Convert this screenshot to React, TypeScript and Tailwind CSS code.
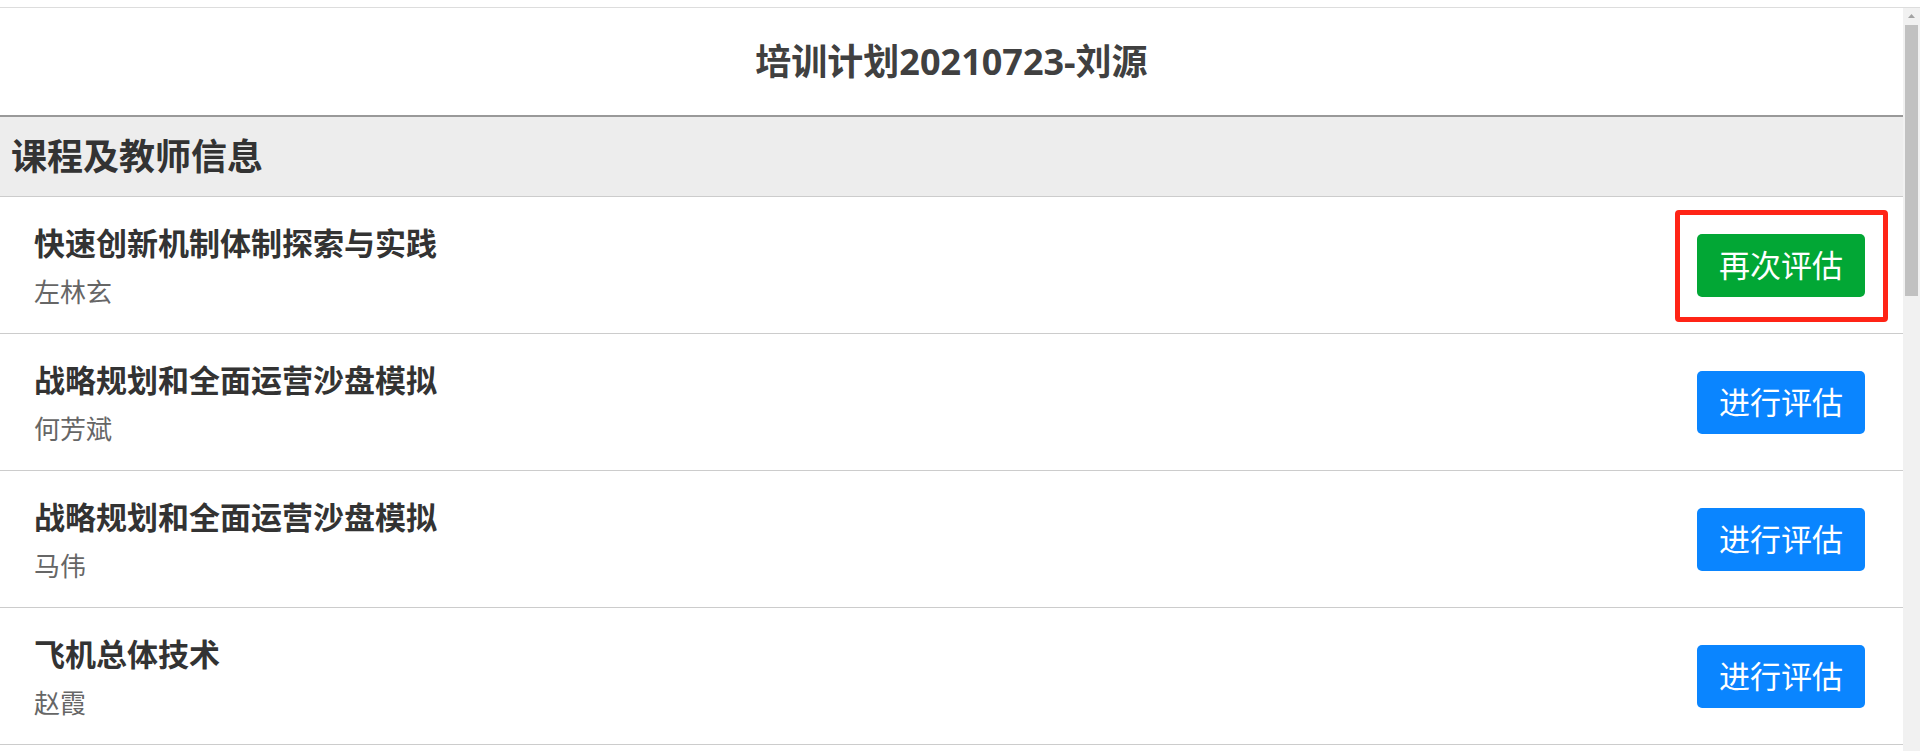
import React from 'react';

// ─── Data ─────────────────────────────────────────────────────
interface CourseItem {
  id: number;
  title: string;
  teacher: string;
  evaluated: boolean;
}

const COURSES: CourseItem[] = [
  { id: 1, title: '快速创新机制体制探索与实践', teacher: '左林玄', evaluated: true },
  { id: 2, title: '战略规划和全面运营沙盘模拟', teacher: '何芳斌', evaluated: false },
  { id: 3, title: '战略规划和全面运营沙盘模拟', teacher: '马伟', evaluated: false },
  { id: 4, title: '飞机总体技术', teacher: '赵霞', evaluated: false },
];

const FONT = "font-['Noto_Sans','Noto_Sans_CJK_SC',sans-serif]";

// ─── Course row ───────────────────────────────────────────────
function CourseRow({ item }: { item: CourseItem }) {
  return (
    <div className="flex h-[137px] items-center justify-between border-b border-[#cccccc] pl-[34px] pr-[38px]">
      <div className="flex flex-col pt-[3px]">
        <div className="text-[31px] font-bold leading-[36px] text-[#333333]">{item.title}</div>
        <div className="mt-[15px] text-[26px] leading-[32px] text-[#666666]">{item.teacher}</div>
      </div>
      {item.evaluated ? (
        <div className="relative">
          <button className="flex h-[63px] w-[168px] items-center justify-center rounded-[5px] bg-[#02a735] text-[31px] leading-none text-white">
            再次评估
          </button>
          {/* red annotation frame */}
          <div className="pointer-events-none absolute -bottom-[25px] -left-[22px] -right-[23px] -top-[24px] rounded-[4px] border-[5px] border-[#ff2416]" />
        </div>
      ) : (
        <button className="flex h-[63px] w-[168px] items-center justify-center rounded-[5px] bg-[#0a85ff] text-[31px] leading-none text-white">
          进行评估
        </button>
      )}
    </div>
  );
}

// ─── Page ─────────────────────────────────────────────────────
export default function App() {
  return (
    <div className={`h-[751px] w-full overflow-hidden bg-white ${FONT}`}>
      <div className="h-[7px]" />
      <div className="flex h-[744px] border-t border-[#dddddd]">
        <div className="min-w-0 flex-1">
          <div className="flex h-[107px] items-center justify-center text-[36px] font-bold text-[#404040]">
            培训计划20210723-刘源
          </div>
          <div className="flex h-[82px] items-center border-b border-t-2 border-b-[#cccccc] border-t-[#999999] bg-[#ededed] px-[11px] text-[36px] font-bold text-[#333333]">
            课程及教师信息
          </div>
          {COURSES.map((c) => (
            <CourseRow key={c.id} item={c} />
          ))}
        </div>

        {/* scrollbar */}
        <div className="flex w-[17px] flex-col items-center bg-[#f1f1f1]">
          <svg width="9" height="17" viewBox="0 0 9 17">
            <path d="M4.5 6 L8 10 L1 10 Z" fill="#a3a3a3" />
          </svg>
          <div className="h-[271px] w-[13px] bg-[#c1c1c1]" />
        </div>
      </div>
    </div>
  );
}
